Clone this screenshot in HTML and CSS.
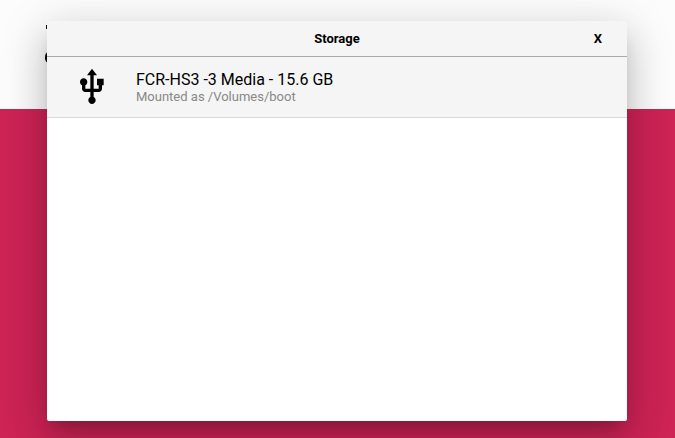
FILE: index.html
```html
<!DOCTYPE html>
<html lang="en">
<head>
<meta charset="utf-8">
<title>Storage</title>
<link rel="stylesheet" href="styles.css">
</head>
<body>
<div class="page">
  <div class="page-top">
    <span class="mark mark-upper"></span>
    <span class="mark mark-lower"></span>
  </div>
  <div class="page-body"></div>
</div>
<section class="dialog">
  <header class="dialog-header">
    <span class="dialog-title">Storage</span>
    <span class="dialog-close">X</span>
  </header>
  <div class="drive">
    <svg class="drive-icon" viewBox="0 0 24 24"><path d="M15 7v4h1v2h-3V5h2l-3-4-3 4h2v8H8v-2.07c.7-.37 1.2-1.08 1.2-1.93 0-1.21-.99-2.2-2.2-2.2-1.21 0-2.2.99-2.2 2.2 0 .85.5 1.56 1.2 1.93V13c0 1.11.89 2 2 2h3v3.05c-.71.37-1.2 1.1-1.2 1.95 0 1.22.99 2.2 2.2 2.2 1.21 0 2.2-.98 2.2-2.2 0-.85-.49-1.58-1.2-1.95V15h3c1.11 0 2-.89 2-2v-2h1V7h-4z"/></svg>
    <div class="drive-text">
      <div class="drive-name">FCR-HS3 -3 Media - 15.6 GB</div>
      <div class="drive-mount">Mounted as /Volumes/boot</div>
    </div>
  </div>
</section>
</body>
</html>
```
FILE: styles.css
```css
* { box-sizing: border-box; }
body {
  margin: 0;
  height: 438px;
  overflow: hidden;
  font-family: Roboto, "Liberation Sans", sans-serif;
  color: #000;
}
.page {
  display: flex;
  flex-direction: column;
  height: 438px;
}
.page-top {
  position: relative;
  height: 109px;
  background: #fcfcfc;
}
.page-body { flex: 1; background: #cd2355; }
.mark { position: absolute; background: #000; }
.mark-upper { left: 46px; top: 25px; width: 4px; height: 4px; }
.mark-lower { left: 45px; top: 52px; width: 8px; height: 11px; border-radius: 45%; }
.dialog {
  position: absolute;
  left: 47px;
  top: 21px;
  width: 580px;
  height: 400px;
  background: #fff;
  border-radius: 2px;
  overflow: hidden;
  box-shadow: 0 20px 36px 1px rgba(0,0,0,.13), 0 9px 46px 5px rgba(0,0,0,.13), 0 11px 15px -7px rgba(0,0,0,.2);
}
.dialog-header {
  display: grid;
  grid-template-columns: 58px 1fr 58px;
  align-items: center;
  height: 36px;
  background: #f5f5f5;
  border-bottom: 1px solid #aaa;
  font-size: 13px;
  font-weight: 700;
  line-height: 16px;
  text-align: center;
}
.dialog-title { grid-column: 2; }
.drive {
  display: flex;
  align-items: flex-start;
  gap: 24px;
  height: 61px;
  padding: 10px 25px;
  background: #f5f5f5;
  border-bottom: 1px solid #d9d9d9;
}
.drive-icon { width: 40px; height: 40px; }
.drive-text { padding-top: 2px; }
.drive-name { font-size: 16px; line-height: 21px; }
.drive-mount { font-size: 13px; line-height: 13px; color: #888; }
```
